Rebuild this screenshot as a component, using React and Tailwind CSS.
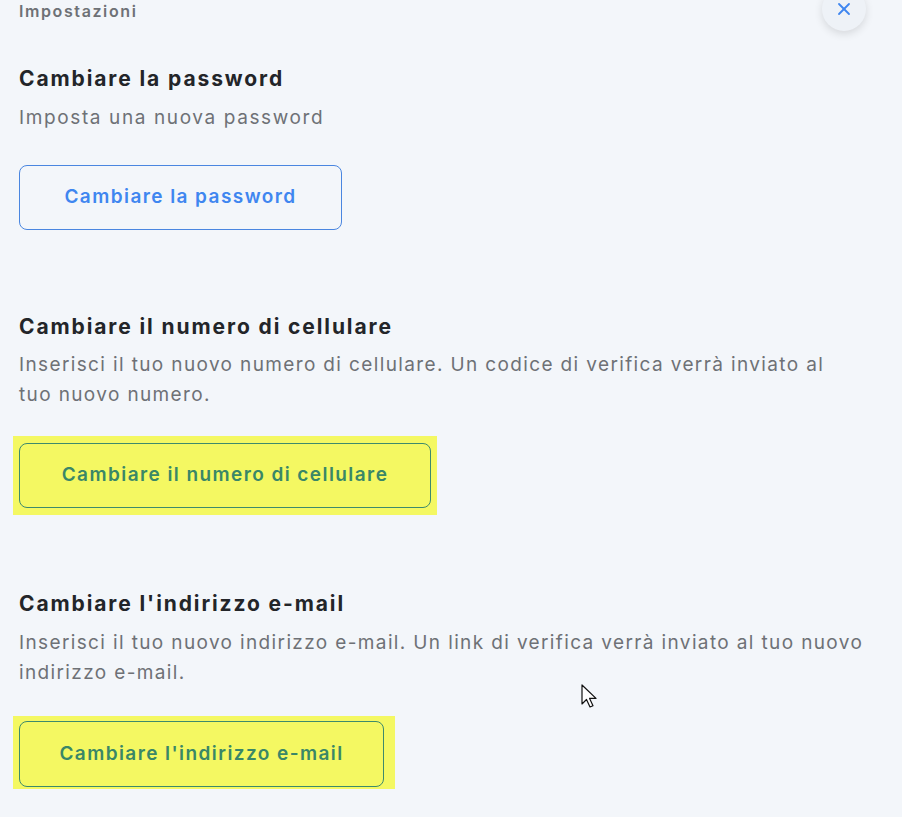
import { X } from 'lucide-react';

const SECTIONS = [
  {
    title: 'Cambiare la password',
    desc: 'Imposta una nuova password',
    button: 'Cambiare la password',
  },
  {
    title: 'Cambiare il numero di cellulare',
    desc: 'Inserisci il tuo nuovo numero di cellulare. Un codice di verifica verrà inviato al tuo nuovo numero.',
    button: 'Cambiare il numero di cellulare',
  },
  {
    title: "Cambiare l'indirizzo e-mail",
    desc: "Inserisci il tuo nuovo indirizzo e-mail. Un link di verifica verrà inviato al tuo nuovo indirizzo e-mail.",
    button: "Cambiare l'indirizzo e-mail",
  },
];

function Cursor() {
  return (
    <svg className="absolute left-[581px] top-[684px]" width="20" height="28" viewBox="0 0 20 28">
      <path d="M1 1 L1 20 L5.5 15.5 L9 23 L12 21.7 L8.6 14.4 L15 14.4 Z" fill="#fff" stroke="#111" strokeWidth="1.2" strokeLinejoin="round" />
    </svg>
  );
}

const h2 = 'text-[21px] font-bold leading-[28px] tracking-[0.09em] text-[#232529]';
const desc = 'text-[19px] leading-[30px] tracking-[0.072em] text-[#6e7176]';
const btnText = 'text-[19px] font-semibold tracking-[0.075em]';

export default function App() {
  return (
    <div className="relative min-h-screen overflow-hidden bg-[#f3f6fa] font-['Inter',sans-serif]">
      <div className="flex items-start justify-between pl-[19px] pr-[36px]">
        <span className="text-[16px] font-semibold leading-[22px] tracking-[0.1em] text-[#6e7176]">Impostazioni</span>
        <button className="-mt-[13px] flex h-[44px] w-[44px] items-center justify-center rounded-full bg-[#eef2f7] shadow-[0_3px_8px_rgba(0,0,0,0.12)]">
          <X size={20} strokeWidth={2.2} className="text-[#3f86f0]" />
        </button>
      </div>

      <div className="flex flex-col pl-[19px]">
        {/* password */}
        <div className="mt-[34px]">
          <h2 className={h2}>{SECTIONS[0].title}</h2>
          <p className={`mt-[10px] tracking-[0.085em] ${desc}`}>{SECTIONS[0].desc}</p>
          <button className={`mt-[32px] flex h-[65px] w-[323px] items-center justify-center rounded-[8px] border border-[#4a86e0] text-[#3f86f0] ${btnText}`}>
            {SECTIONS[0].button}
          </button>
        </div>

        {/* cellulare */}
        <div className="mt-[83px]">
          <h2 className={h2}>{SECTIONS[1].title}</h2>
          <p className={`mt-[9px] w-[842px] ${desc}`}>{SECTIONS[1].desc}</p>
          <div className="-ml-[6px] mt-[26px] w-fit bg-[#f4f862] px-[6px] py-[7px]">
            <button className={`flex h-[65px] w-[412px] items-center justify-center rounded-[8px] border border-[#3d8a6c] text-[#3a8767] ${btnText}`}>
              {SECTIONS[1].button}
            </button>
          </div>
        </div>

        {/* email */}
        <div className="mt-[75px]">
          <h2 className={h2}>{SECTIONS[2].title}</h2>
          <p className={`mt-[10px] w-[856px] ${desc}`}>{SECTIONS[2].desc}</p>
          <div className="-ml-[6px] mt-[28px] w-fit bg-[#f4f862] pb-[2px] pl-[6px] pr-[11px] pt-[5px]">
            <button className={`flex h-[66px] w-[365px] items-center justify-center rounded-[8px] border border-[#3d8a6c] text-[#3a8767] ${btnText}`}>
              {SECTIONS[2].button}
            </button>
          </div>
        </div>
      </div>

      <Cursor />
    </div>
  );
}
